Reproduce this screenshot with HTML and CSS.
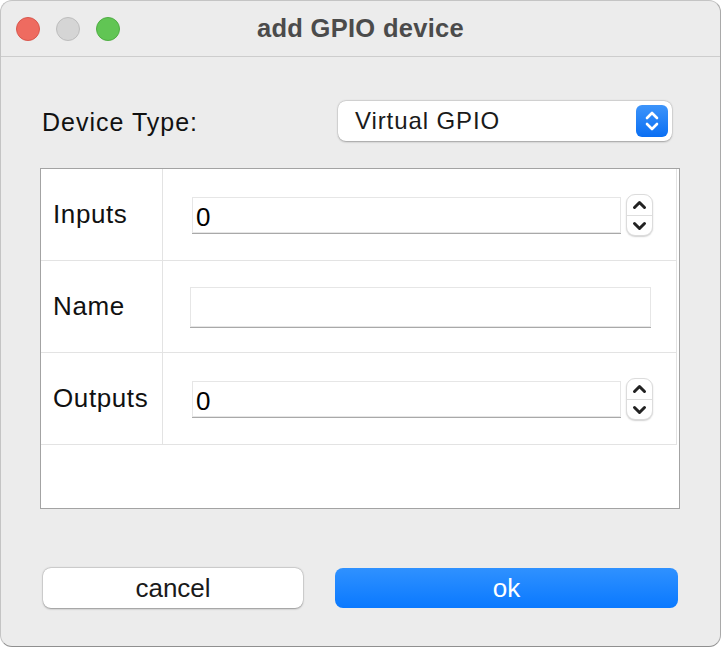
FILE: index.html
```html
<!DOCTYPE html>
<html>
<head>
<meta charset="utf-8">
<link rel="stylesheet" href="styles.css">
</head>
<body>
<div class="window">
  <div class="titlebar">
    <div class="lights">
      <span class="light red"></span>
      <span class="light gray"></span>
      <span class="light green"></span>
    </div>
    <div class="title">add GPIO device</div>
    <div></div>
  </div>
  <div class="content">
    <div class="type-row">
      <span class="type-label">Device Type:</span>
      <div class="combo">
        <span class="combo-text">Virtual GPIO</span>
        <span class="combo-btn">
          <svg width="32" height="32" viewBox="0 0 32 32"><path d="M11 13 L16 8 L21 13" fill="none" stroke="#fff" stroke-width="2.6" stroke-linecap="round" stroke-linejoin="round"/><path d="M11 19 L16 24 L21 19" fill="none" stroke="#fff" stroke-width="2.6" stroke-linecap="round" stroke-linejoin="round"/></svg>
        </span>
      </div>
    </div>
    <div class="frame">
      <div class="grid">
        <div class="cell label">Inputs</div>
        <div class="cell field">
          <div class="spin">
            <div class="input num">0</div>
            <div class="stepper">
              <span class="step"><svg width="25" height="20" viewBox="0 0 25 20"><path d="M7.5 12.5 L12.5 7.5 L17.5 12.5" fill="none" stroke="#222" stroke-width="3" stroke-linecap="round" stroke-linejoin="round"/></svg></span>
              <span class="step down"><svg width="25" height="20" viewBox="0 0 25 20"><path d="M7.5 7.5 L12.5 12.5 L17.5 7.5" fill="none" stroke="#222" stroke-width="3" stroke-linecap="round" stroke-linejoin="round"/></svg></span>
            </div>
          </div>
        </div>
        <div class="cell label">Name</div>
        <div class="cell field">
          <div class="input name"></div>
        </div>
        <div class="cell label">Outputs</div>
        <div class="cell field">
          <div class="spin">
            <div class="input num">0</div>
            <div class="stepper">
              <span class="step"><svg width="25" height="20" viewBox="0 0 25 20"><path d="M7.5 12.5 L12.5 7.5 L17.5 12.5" fill="none" stroke="#222" stroke-width="3" stroke-linecap="round" stroke-linejoin="round"/></svg></span>
              <span class="step down"><svg width="25" height="20" viewBox="0 0 25 20"><path d="M7.5 7.5 L12.5 12.5 L17.5 7.5" fill="none" stroke="#222" stroke-width="3" stroke-linecap="round" stroke-linejoin="round"/></svg></span>
            </div>
          </div>
        </div>
      </div>
    </div>
    <div class="buttons">
      <button class="btn cancel">cancel</button>
      <button class="btn ok">ok</button>
    </div>
  </div>
</div>
</body>
</html>
```
FILE: styles.css
```css
* { box-sizing: border-box; }
html, body { margin: 0; padding: 0; background: #ffffff; }
body { font-family: "Liberation Sans", Arial, sans-serif; color: #111; }

.window {
  width: 721px;
  height: 647px;
  background: #ececec;
  border: 1px solid #c4c4c4;
  border-right-color: #a9a9a9;
  border-bottom-color: #8f8f8f;
  border-radius: 12px;
  overflow: hidden;
}

.titlebar {
  height: 56px;
  border-bottom: 1px solid #cdcdcd;
  display: grid;
  grid-template-columns: 1fr auto 1fr;
  align-items: center;
}
.lights { display: flex; gap: 16px; padding-left: 15px; }
.light {
  width: 24px; height: 24px; border-radius: 50%;
  display: block;
}
.red { background: #ee6b60; border: 1px solid #d9574d; }
.gray { background: #d5d5d5; border: 1px solid #bdbdbd; }
.green { background: #61c554; border: 1px solid #4fad43; }
.title {
  font-weight: bold;
  font-size: 25.5px;
  color: #4b4b4b;
  letter-spacing: 0.3px;
  padding-top: 0;
}

.content { padding: 0 40px 0 39px; }

.type-row {
  display: flex;
  justify-content: space-between;
  align-items: center;
  margin-top: 44px;
  padding-left: 2px;
  padding-right: 8px;
}
.type-label { font-size: 25px; color: #111; letter-spacing: 1px; padding-top: 2px; }
.combo {
  width: 334px; height: 40px;
  background: #fff;
  border-radius: 8px;
  box-shadow: 0 0.5px 2px rgba(0,0,0,0.3), 0 0 0 0.5px rgba(0,0,0,0.08);
  display: flex; align-items: center; justify-content: space-between;
  padding: 0 4px 0 17px;
}
.combo-text { font-size: 24px; color: #1a1a1a; letter-spacing: 0.9px; }
.combo-btn {
  width: 32px; height: 32px; border-radius: 6px;
  background: linear-gradient(#3d94fa, #0a6ff3);
  display: block;
}
.combo-btn svg { display: block; }

.frame {
  margin-top: 27px;
  height: 341px;
  background: #fff;
  border: 1px solid #a3a3a3;
}
.grid {
  width: 636px;
  display: grid;
  grid-template-columns: 122px 1fr;
  border-right: 1px solid #e3e3e3;
}
.cell {
  height: 92px;
  border-bottom: 1px solid #e3e3e3;
  display: flex;
  align-items: center;
}
.label {
  border-right: 1px solid #e3e3e3;
  padding-left: 12px;
  font-size: 26px;
  letter-spacing: 0.6px;
  color: #111;
}
.field { padding-left: 27px; }

.spin { display: flex; align-items: center; gap: 5px; margin-left: 2px; padding-top: 1px; }
.input {
  background: #fff;
  border: 1px solid #e6e6e6;
  box-shadow: 0 1px 0 #a9a9a9;
}
.num {
  width: 429px; height: 36px;
  font-size: 26px; padding-left: 3px; line-height: 34px; padding-top: 2px;
  color: #000;
}
.name { width: 461px; height: 40px; }
.stepper {
  width: 27px; height: 42px;
  border-radius: 9px;
  background: #fff;
  border: 1px solid #dcdcdc;
  box-shadow: 0 1px 1.5px rgba(0,0,0,0.18);
  display: flex; flex-direction: column;
  overflow: hidden;
}
.step { flex: 1; display: flex; align-items: center; justify-content: center; }
.step svg { display: block; }
.step.down { border-top: 1px solid #dedede; }

.buttons {
  display: flex;
  gap: 32px;
  margin-top: 59px;
  padding-left: 3px;
}
.btn {
  height: 40px;
  border-radius: 8px;
  font-family: "Liberation Sans", Arial, sans-serif;
  font-size: 26px;
  border: none;
  padding: 0;
}
.cancel {
  width: 260px;
  background: #fff;
  color: #1a1a1a;
  box-shadow: 0 0.5px 2px rgba(0,0,0,0.35), 0 0 0 0.5px rgba(0,0,0,0.1);
}
.ok {
  width: 343px;
  background: linear-gradient(#2f91ff, #0a79ff);
  color: #fff;
}
```
